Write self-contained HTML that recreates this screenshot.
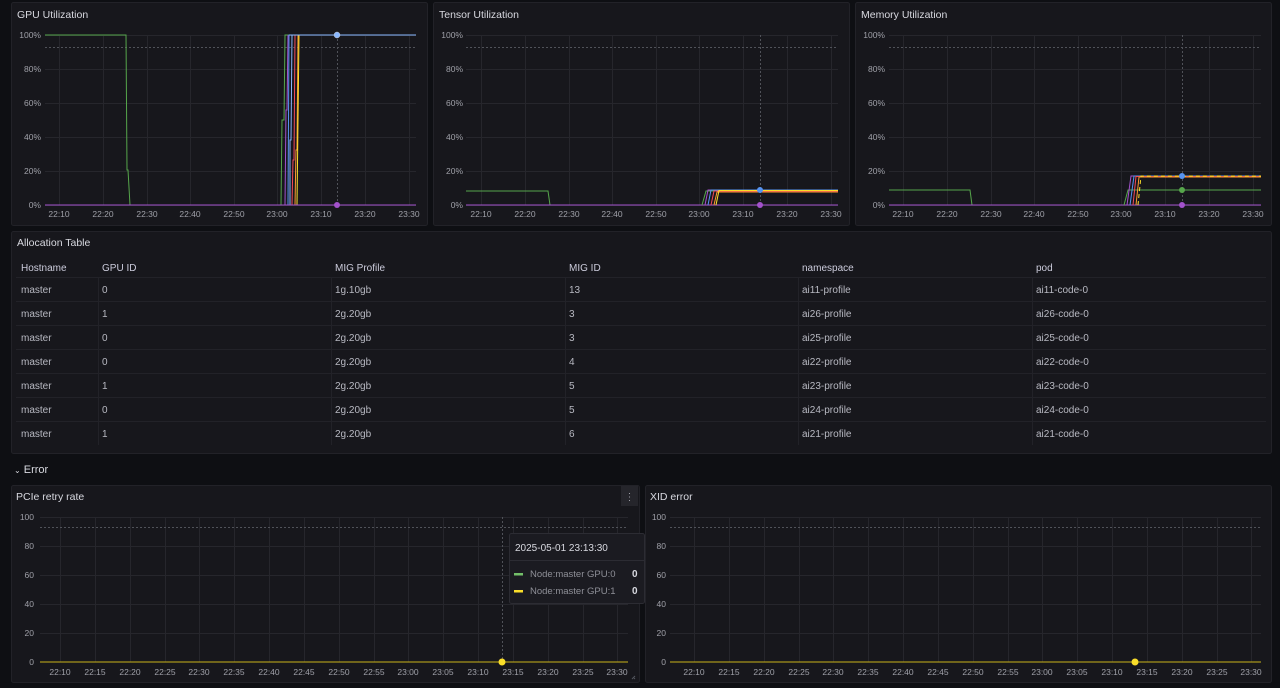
<!DOCTYPE html>
<html><head><meta charset="utf-8"><style>
html,body{margin:0;padding:0;background:#0e0f13;width:1280px;height:688px;overflow:hidden}
svg{display:block;font-family:"Liberation Sans",sans-serif}
</style></head><body>
<svg width="1280" height="688" viewBox="0 0 1280 688" xmlns="http://www.w3.org/2000/svg">
<rect width="1280" height="688" fill="#0e0f13"/>
<g fill="#17171c" stroke="#222228">
<rect x="11.5" y="2.5" width="416" height="223" rx="2"/>
<rect x="433.5" y="2.5" width="416" height="223" rx="2"/>
<rect x="855.5" y="2.5" width="416" height="223" rx="2"/>
<rect x="11.5" y="231.5" width="1260" height="222" rx="2"/>
<rect x="11.5" y="485.5" width="628" height="197" rx="2"/>
<rect x="645.5" y="485.5" width="626" height="197" rx="2"/>
</g>
<g fill="#d8d9e0" font-size="10.5" font-weight="500">
<text x="17" y="18">GPU Utilization</text>
<text x="439" y="18">Tensor Utilization</text>
<text x="861" y="18">Memory Utilization</text>
<text x="17" y="246">Allocation Table</text>
<text x="16" y="500">PCIe retry rate</text>
<text x="650" y="500">XID error</text>
</g>
<text x="14" y="473" fill="#d8d9e0" font-size="11"><tspan font-size="8">⌄</tspan> Error</text>
<rect x="621" y="486" width="17" height="20" fill="#25252b"/>
<text x="629.5" y="500" fill="#9fa0a8" font-size="10" text-anchor="middle">⋮</text>

<g stroke="#26262c" stroke-width="1" fill="none">
<path d="M45 35.5H416M45 69.5H416M45 103.5H416M45 137.5H416M45 171.5H416M45 205.5H416"/>
<path d="M59.5 35V205M103.5 35V205M147.5 35V205M190.5 35V205M234.5 35V205M277.5 35V205M321.5 35V205M365.5 35V205M409.5 35V205"/>
<path d="M466 35.5H838M466 69.5H838M466 103.5H838M466 137.5H838M466 171.5H838M466 205.5H838"/>
<path d="M481.5 35V205M525.5 35V205M569.5 35V205M612.5 35V205M656.5 35V205M699.5 35V205M743.5 35V205M787.5 35V205M831.5 35V205"/>
<path d="M889 35.5H1261M889 69.5H1261M889 103.5H1261M889 137.5H1261M889 171.5H1261M889 205.5H1261"/>
<path d="M903.5 35V205M947.5 35V205M991.5 35V205M1034.5 35V205M1078.5 35V205M1121.5 35V205M1165.5 35V205M1209.5 35V205M1253.5 35V205"/>
<path d="M40 517.5H628M40 546.5H628M40 575.5H628M40 604.5H628M40 633.5H628"/>
<path d="M60.5 517V662M95.5 517V662M130.5 517V662M165.5 517V662M199.5 517V662M234.5 517V662M269.5 517V662M304.5 517V662M339.5 517V662M374.5 517V662M408.5 517V662M443.5 517V662M478.5 517V662M513.5 517V662M548.5 517V662M583.5 517V662M617.5 517V662"/>
<path d="M670 517.5H1261M670 546.5H1261M670 575.5H1261M670 604.5H1261M670 633.5H1261"/>
<path d="M694.5 517V662M729.5 517V662M764.5 517V662M799.5 517V662M833.5 517V662M868.5 517V662M903.5 517V662M938.5 517V662M973.5 517V662M1008.5 517V662M1042.5 517V662M1077.5 517V662M1112.5 517V662M1147.5 517V662M1182.5 517V662M1217.5 517V662M1251.5 517V662"/>
</g>
<g stroke="#505259" stroke-dasharray="2 2" fill="none">
<path d="M45 47.5H416M466 47.5H838M889 47.5H1261M40 527.5H628M670 527.5H1261"/>
<path d="M337.5 35V205M760.5 35V205M1182.5 35V205M502.5 517V662"/>
</g>

<g fill="#9fa0a8" font-size="8.5" text-anchor="end">
<text x="41" y="38">100%</text><text x="41" y="72">80%</text><text x="41" y="106">60%</text><text x="41" y="140">40%</text><text x="41" y="174">20%</text><text x="41" y="208">0%</text>
<text x="463" y="38">100%</text><text x="463" y="72">80%</text><text x="463" y="106">60%</text><text x="463" y="140">40%</text><text x="463" y="174">20%</text><text x="463" y="208">0%</text>
<text x="885" y="38">100%</text><text x="885" y="72">80%</text><text x="885" y="106">60%</text><text x="885" y="140">40%</text><text x="885" y="174">20%</text><text x="885" y="208">0%</text>
<text x="34" y="520">100</text><text x="34" y="549">80</text><text x="34" y="578">60</text><text x="34" y="607">40</text><text x="34" y="636">20</text><text x="34" y="665">0</text>
<text x="666" y="520">100</text><text x="666" y="549">80</text><text x="666" y="578">60</text><text x="666" y="607">40</text><text x="666" y="636">20</text><text x="666" y="665">0</text>
</g>
<g fill="#9fa0a8" font-size="8.5" text-anchor="middle">
<text x="59" y="217">22:10</text><text x="103" y="217">22:20</text><text x="147" y="217">22:30</text><text x="190" y="217">22:40</text><text x="234" y="217">22:50</text><text x="277" y="217">23:00</text><text x="321" y="217">23:10</text><text x="365" y="217">23:20</text><text x="409" y="217">23:30</text>
<text x="481" y="217">22:10</text><text x="525" y="217">22:20</text><text x="569" y="217">22:30</text><text x="612" y="217">22:40</text><text x="656" y="217">22:50</text><text x="699" y="217">23:00</text><text x="743" y="217">23:10</text><text x="787" y="217">23:20</text><text x="831" y="217">23:30</text>
<text x="903" y="217">22:10</text><text x="947" y="217">22:20</text><text x="991" y="217">22:30</text><text x="1034" y="217">22:40</text><text x="1078" y="217">22:50</text><text x="1121" y="217">23:00</text><text x="1165" y="217">23:10</text><text x="1209" y="217">23:20</text><text x="1253" y="217">23:30</text>
<text x="60" y="675">22:10</text><text x="95" y="675">22:15</text><text x="130" y="675">22:20</text><text x="165" y="675">22:25</text><text x="199" y="675">22:30</text><text x="234" y="675">22:35</text><text x="269" y="675">22:40</text><text x="304" y="675">22:45</text><text x="339" y="675">22:50</text><text x="374" y="675">22:55</text><text x="408" y="675">23:00</text><text x="443" y="675">23:05</text><text x="478" y="675">23:10</text><text x="513" y="675">23:15</text><text x="548" y="675">23:20</text><text x="583" y="675">23:25</text><text x="617" y="675">23:30</text>
<text x="694" y="675">22:10</text><text x="729" y="675">22:15</text><text x="764" y="675">22:20</text><text x="799" y="675">22:25</text><text x="833" y="675">22:30</text><text x="868" y="675">22:35</text><text x="903" y="675">22:40</text><text x="938" y="675">22:45</text><text x="973" y="675">22:50</text><text x="1008" y="675">22:55</text><text x="1042" y="675">23:00</text><text x="1077" y="675">23:05</text><text x="1112" y="675">23:10</text><text x="1147" y="675">23:15</text><text x="1182" y="675">23:20</text><text x="1217" y="675">23:25</text><text x="1251" y="675">23:30</text>
</g>

<g fill="none" stroke-width="1">
<path d="M45 35H126L127 170H128L130 205" stroke="#56a64b"/>
<path d="M281 205L282 120H284L285 35H416" stroke="#56a64b"/>
<path d="M285 205L286 110H287L288 35" stroke="#a352cc"/>
<path d="M288 205L289 35H416" stroke="#5794f2"/>
<path d="M290 205V140H291L292 35" stroke="#8ab8ff"/>
<path d="M292 205L293 160H294L295 35" stroke="#f2495c"/>
<path d="M295 205L296 150H297L298 35" stroke="#ff9830"/>
<path d="M297 205L299 35" stroke="#fade2a"/>
<path d="M45 205H416" stroke="#a352cc"/>
<path d="M289 35H416" stroke="#8ab8ff"/>
</g>
<circle cx="337" cy="35" r="3" fill="#8ab8ff" stroke="#ccc" stroke-width=".5"/>
<circle cx="337" cy="205" r="3" fill="#a352cc"/>

<g fill="none" stroke-width="1">
<path d="M466 191H548L550 205" stroke="#56a64b"/>
<path d="M466 205H838" stroke="#a352cc"/>
<path d="M702 205L706 191H838" stroke="#56a64b"/>
<path d="M705 205L708 190H838" stroke="#a352cc"/>
<path d="M708 205L711 190H838" stroke="#5794f2"/>
<path d="M711 205L714 191H838" stroke="#f2495c"/>
<path d="M714 205L717 192H838" stroke="#ff9830"/>
<path d="M716 205L719 190.5H838" stroke="#fade2a"/>
</g>
<circle cx="760" cy="190" r="3" fill="#5794f2"/>
<circle cx="760" cy="205" r="3" fill="#a352cc"/>

<g fill="none" stroke-width="1">
<path d="M889 190H970L972 205" stroke="#56a64b"/>
<path d="M889 205H1261" stroke="#a352cc"/>
<path d="M1124 205L1128 190H1261" stroke="#56a64b"/>
<path d="M1127 205L1131 176H1261" stroke="#a352cc"/>
<path d="M1130 205L1134 176H1261" stroke="#5794f2"/>
<path d="M1133 205L1136 176.5H1261" stroke="#f2495c"/>
<path d="M1136 205L1139 177H1261" stroke="#ff9830"/>
<path d="M1138 205L1141 176H1261" stroke="#fade2a" stroke-dasharray="4 3"/>
</g>
<circle cx="1182" cy="176" r="3" fill="#5794f2"/>
<circle cx="1182" cy="190" r="3" fill="#56a64b"/>
<circle cx="1182" cy="205" r="3" fill="#a352cc"/>

<path d="M40 662H628M670 662H1261" stroke="#c9b31a" stroke-width="1"/>
<circle cx="502" cy="662" r="3.5" fill="#fade2a"/>
<circle cx="1135" cy="662" r="3.5" fill="#fade2a"/>
<path d="M632 679L635 676M634 679L635 678" stroke="#55575f"/>

<g stroke="#222228" stroke-width="1">
<path d="M16 277.5H1266M16 301.5H1266M16 325.5H1266M16 349.5H1266M16 373.5H1266M16 397.5H1266M16 421.5H1266"/>
<path d="M98.5 278V445M331.5 278V445M565.5 278V445M798.5 278V445M1032.5 278V445"/>
</g>
<g fill="#ccccdc" font-size="10">
<text y="271"><tspan x="21">Hostname</tspan><tspan x="102">GPU ID</tspan><tspan x="335">MIG Profile</tspan><tspan x="569">MIG ID</tspan><tspan x="802">namespace</tspan><tspan x="1036">pod</tspan></text>
</g>
<g fill="#b8b9c2" font-size="10">
<text y="293"><tspan x="21">master</tspan><tspan x="102">0</tspan><tspan x="335">1g.10gb</tspan><tspan x="569">13</tspan><tspan x="802">ai11-profile</tspan><tspan x="1036">ai11-code-0</tspan></text>
<text y="317"><tspan x="21">master</tspan><tspan x="102">1</tspan><tspan x="335">2g.20gb</tspan><tspan x="569">3</tspan><tspan x="802">ai26-profile</tspan><tspan x="1036">ai26-code-0</tspan></text>
<text y="341"><tspan x="21">master</tspan><tspan x="102">0</tspan><tspan x="335">2g.20gb</tspan><tspan x="569">3</tspan><tspan x="802">ai25-profile</tspan><tspan x="1036">ai25-code-0</tspan></text>
<text y="365"><tspan x="21">master</tspan><tspan x="102">0</tspan><tspan x="335">2g.20gb</tspan><tspan x="569">4</tspan><tspan x="802">ai22-profile</tspan><tspan x="1036">ai22-code-0</tspan></text>
<text y="389"><tspan x="21">master</tspan><tspan x="102">1</tspan><tspan x="335">2g.20gb</tspan><tspan x="569">5</tspan><tspan x="802">ai23-profile</tspan><tspan x="1036">ai23-code-0</tspan></text>
<text y="413"><tspan x="21">master</tspan><tspan x="102">0</tspan><tspan x="335">2g.20gb</tspan><tspan x="569">5</tspan><tspan x="802">ai24-profile</tspan><tspan x="1036">ai24-code-0</tspan></text>
<text y="437"><tspan x="21">master</tspan><tspan x="102">1</tspan><tspan x="335">2g.20gb</tspan><tspan x="569">6</tspan><tspan x="802">ai21-profile</tspan><tspan x="1036">ai21-code-0</tspan></text>
</g>

<rect x="509.5" y="533.5" width="135" height="70" rx="2" fill="#1b1b21" stroke="#2c2c33"/>
<path d="M510 560.5H644" stroke="#2c2c33"/>
<text x="515" y="551" fill="#d8d9e0" font-size="10">2025-05-01 23:13:30</text>
<rect x="514" y="573" width="9" height="2.5" fill="#73bf69"/>
<rect x="514" y="590" width="9" height="2.5" fill="#fade2a"/>
<g font-size="9.5" fill="#8e8f97">
<text x="530" y="577">Node:master  GPU:0</text>
<text x="530" y="594">Node:master  GPU:1</text>
</g>
<g font-size="10" fill="#d8d9e0" font-weight="bold">
<text x="632" y="577">0</text><text x="632" y="594">0</text>
</g>
</svg>
</body></html>
